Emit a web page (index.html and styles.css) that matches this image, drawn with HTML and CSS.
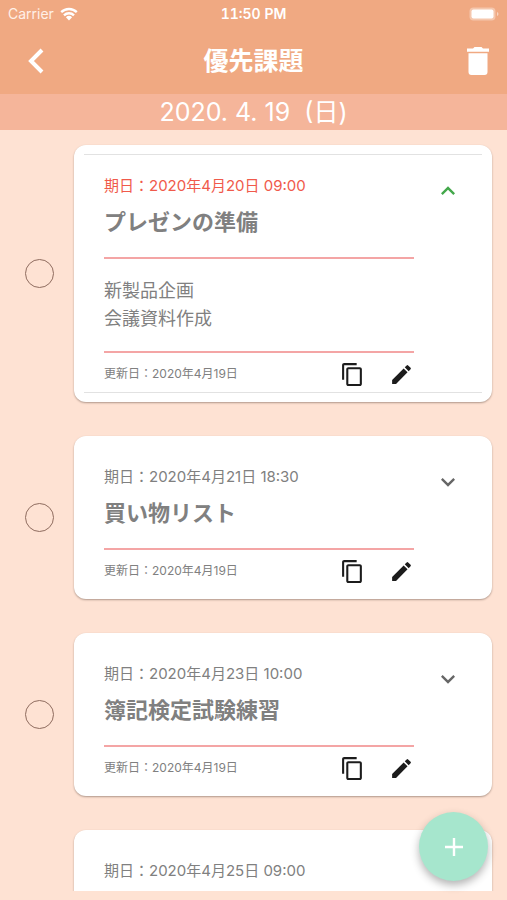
FILE: index.html
```html
<!DOCTYPE html>
<html lang="ja">
<head>
<meta charset="utf-8">
<meta name="viewport" content="width=device-width, initial-scale=1">
<title>優先課題</title>
<link rel="stylesheet" href="styles.css">
</head>
<body>
<svg class="defs" aria-hidden="true">
  <symbol id="copy" viewBox="0 0 24 24"><path d="M16 1H4c-1.100 0-2 .9-2 2v14h2V3h12V1zm3 4H8c-1.100 0-2 .9-2 2v14c0 1.100.9 2 2 2h11c1.100 0 2-.9 2-2V7c0-1.100-.9-2-2-2zm0 16H8V7h11v14z"/></symbol>
  <symbol id="edit" viewBox="0 0 24 24"><path d="M3 17.250V21h3.750L17.810 9.940l-3.750-3.750L3 17.250zM20.710 7.040a1 1 0 0 0 0-1.410l-2.340-2.340a1 1 0 0 0-1.410 0l-1.830 1.830 3.750 3.750 1.830-1.830z"/></symbol>
  <symbol id="down" viewBox="0 0 24 24"><path d="M16.590 8.590L12 13.170 7.410 8.590 6 10l6 6 6-6z"/></symbol>
  <symbol id="up" viewBox="0 0 24 24"><path d="M12 8l-6 6 1.410 1.410L12 10.830l4.590 4.580L18 14z"/></symbol>
</svg>
<header class="top">
  <div class="status">
    <span class="carrier">Carrier
      <svg class="wifi" viewBox="0 0 18 14" aria-hidden="true"><path d="M1.200 5.200a11.200 11.200 0 0 1 15.600 0M4 8.300a7.200 7.200 0 0 1 10 0" fill="none" stroke="currentColor" stroke-width="2.400"/><path d="M5.900 10.300a4.500 4.500 0 0 1 6.200 0L9 13.600z" fill="currentColor"/></svg>
    </span>
    <span class="clock">11:50 PM</span>
    <svg class="battery" viewBox="0 0 30 14" aria-hidden="true"><rect x="0.500" y="0.500" width="26" height="13" rx="4" fill="#fff" opacity=".35"/><rect x="2.500" y="2.500" width="22" height="9" rx="2" fill="currentColor"/><path d="M28 5v4q1.500-.5 1.500-2T28 5z" fill="currentColor" opacity=".5"/></svg>
  </div>
  <div class="bar">
    <button class="bar-button" aria-label="戻る"><svg class="back" viewBox="0 0 16 26"><path d="M14 2L3 13 14 24" fill="none" stroke="currentColor" stroke-width="4"/></svg></button>
    <h1>優先課題</h1>
    <button class="bar-button bar-end" aria-label="削除"><svg class="trash" viewBox="0 0 22 28"><path d="M0 1.600h6L7.500 0h7L16 1.600h6v3.200H0zM1.500 6.300h19V25a3 3 0 0 1-3 3h-13a3 3 0 0 1-3-3z" fill="currentColor"/></svg></button>
  </div>
</header>
<p class="today">2020. 4. 19&nbsp; (日)</p>
<main class="list">
  <div class="row">
    <input class="check" type="checkbox" aria-label="プレゼンの準備">
    <article class="card open">
      <div class="content">
        <p class="due late">期日：2020年4月20日 09:00</p>
        <h2>プレゼンの準備</h2>
        <p class="note">新製品企画<br>会議資料作成</p>
        <div class="foot"><span class="updated">更新日：2020年4月19日</span><button class="icon" aria-label="コピー"><svg><use href="#copy"/></svg></button><button class="icon" aria-label="編集"><svg><use href="#edit"/></svg></button></div>
      </div>
      <button class="toggle" aria-label="閉じる"><svg><use href="#up"/></svg></button>
    </article>
  </div>
  <div class="row">
    <input class="check" type="checkbox" aria-label="買い物リスト">
    <article class="card">
      <div class="content">
        <p class="due">期日：2020年4月21日 18:30</p>
        <h2>買い物リスト</h2>
        <div class="foot"><span class="updated">更新日：2020年4月19日</span><button class="icon" aria-label="コピー"><svg><use href="#copy"/></svg></button><button class="icon" aria-label="編集"><svg><use href="#edit"/></svg></button></div>
      </div>
      <button class="toggle" aria-label="開く"><svg><use href="#down"/></svg></button>
    </article>
  </div>
  <div class="row">
    <input class="check" type="checkbox" aria-label="簿記検定試験練習">
    <article class="card">
      <div class="content">
        <p class="due">期日：2020年4月23日 10:00</p>
        <h2>簿記検定試験練習</h2>
        <div class="foot"><span class="updated">更新日：2020年4月19日</span><button class="icon" aria-label="コピー"><svg><use href="#copy"/></svg></button><button class="icon" aria-label="編集"><svg><use href="#edit"/></svg></button></div>
      </div>
      <button class="toggle" aria-label="開く"><svg><use href="#down"/></svg></button>
    </article>
  </div>
  <div class="row">
    <span></span>
    <article class="card">
      <div class="content">
        <p class="due">期日：2020年4月25日 09:00</p>
      </div>
    </article>
  </div>
</main>
<button class="fab" aria-label="追加"><svg viewBox="0 0 18 18"><path d="M9 0v18M0 9h18" stroke="currentColor" stroke-width="2.400"/></svg></button>
</body>
</html>
```
FILE: styles.css
```css
* { box-sizing: border-box; }

body {
  margin: 0;
  height: 100vh;
  display: flex;
  flex-direction: column;
  overflow: hidden;
  background: #fee2d3;
  color: #808080;
  font-family: Inter, "Noto Sans CJK JP", sans-serif;
}

h1, h2, p { margin: 0; }

button {
  display: grid;
  place-items: center;
  padding: 0;
  border: 0;
  background: none;
  color: inherit;
}

svg { display: block; }
.defs { position: absolute; width: 0; height: 0; }

.top { background: #f0a982; color: #fff; }

.status {
  display: grid;
  grid-template-columns: 1fr auto 1fr;
  align-items: center;
  height: 27px;
  padding: 0 8px;
  font-size: 14px;
}
.carrier { display: flex; align-items: center; gap: 6px; color: #fff0e8; }
.wifi { width: 18px; height: 14px; color: #fff; }
.clock { font-weight: 600; font-variant-numeric: tabular-nums; }
.battery { width: 30px; height: 14px; justify-self: end; }

.bar {
  display: grid;
  grid-template-columns: 1fr auto 1fr;
  align-items: center;
  height: 67px;
  padding: 0 18px;
}
.bar-button { width: 36px; height: 48px; }
.bar-end { justify-self: end; justify-items: end; }
.back { width: 16px; height: 26px; }
.trash { width: 22px; height: 28px; }
h1 { font-size: 25px; line-height: 36px; font-weight: 700; }

.today {
  background: #f5b59a;
  color: #fff;
  font-size: 25px;
  line-height: 36px;
  text-align: center;
}

.list {
  flex: 1;
  min-height: 0;
  display: flex;
  flex-direction: column;
  gap: 34px;
  margin-bottom: 9px;
  padding: 15px 15px 0 0;
  overflow: hidden;
}

.row {
  flex: none;
  display: grid;
  grid-template-columns: 74px 1fr;
  align-items: center;
}

.check {
  appearance: none;
  width: 29px;
  height: 29px;
  margin: 0 0 0 25px;
  border: 1px solid #8f6c5f;
  border-radius: 50%;
}

.card {
  position: relative;
  display: flex;
  align-items: flex-start;
  min-height: 163px;
  padding: 30px 30px 7px;
  border-radius: 12px;
  background: #fff;
  box-shadow: 0 1px 2px rgba(60, 40, 30, .4);
}
.card.open::before {
  content: "";
  position: absolute;
  inset: 9px 10px;
  border: solid #e2e2e2;
  border-width: 1px 0;
  pointer-events: none;
}

.content { flex: 1; }
.due { font-size: 15px; line-height: 22px; }
.late { color: #f05a4b; }

h2 {
  padding: 8px 0 18px;
  border-bottom: 2px solid #f4a5a5;
  font-size: 22px;
  line-height: 34px;
  font-weight: 700;
}

.note {
  padding: 18px 0;
  border-bottom: 2px solid #f4a5a5;
  font-size: 18px;
  line-height: 28px;
}

.foot { display: flex; align-items: center; height: 42px; }
.updated { flex: 1; font-size: 12px; line-height: 18px; }
.icon { width: 25px; height: 25px; color: #1c1c1c; }
.icon + .icon { margin-left: 24px; }
.icon svg { width: 25px; height: 25px; fill: currentColor; }

.toggle { width: 28px; height: 32px; margin-left: 20px; color: #666; }
.toggle svg { width: 28px; height: 28px; fill: currentColor; }
.open .toggle { color: #43a84b; }

.fab {
  position: fixed;
  right: 19px;
  bottom: 19px;
  width: 69px;
  height: 69px;
  border-radius: 50%;
  background: #a6e6cd;
  color: #fff;
  box-shadow: 0 4px 8px rgba(0, 0, 0, .3);
}
.fab svg { width: 18px; height: 18px; }
```
